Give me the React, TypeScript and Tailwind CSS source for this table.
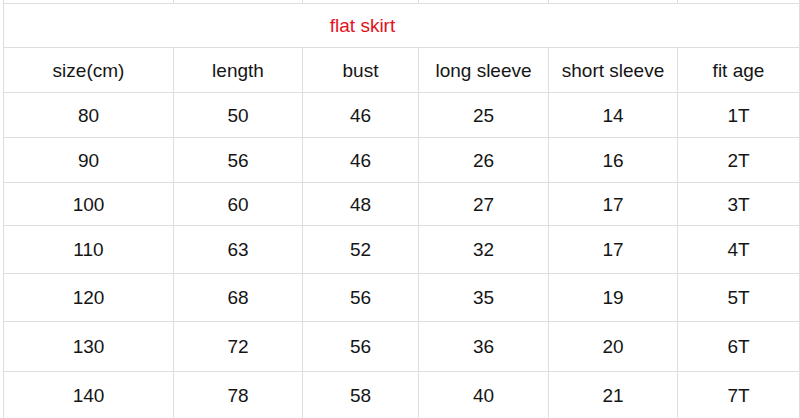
import React from "react";

const header = ["size(cm)", "length", "bust", "long sleeve", "short sleeve", "fit age"];
const rows: { h: string; cells: string[] }[] = [
  { h: "h-[45px]", cells: ["80", "50", "46", "25", "14", "1T"] },
  { h: "h-[45px]", cells: ["90", "56", "46", "26", "16", "2T"] },
  { h: "h-[43px]", cells: ["100", "60", "48", "27", "17", "3T"] },
  { h: "h-[48px]", cells: ["110", "63", "52", "32", "17", "4T"] },
  { h: "h-[48px]", cells: ["120", "68", "56", "35", "19", "5T"] },
  { h: "h-[50px]", cells: ["130", "72", "56", "36", "20", "6T"] },
  { h: "h-[47px]", cells: ["140", "78", "58", "40", "21", "7T"] },
];

const cols = "grid grid-cols-[170px_129px_116px_130px_129px_122px]";

function Row({ h, cells }: { h: string; cells: string[] }) {
  return (
    <div className={`${cols} ${h}`}>
      {cells.map((c, i) => (
        <div
          key={i}
          className="flex items-center justify-center border-r border-b border-[#dedede] text-[19px] leading-none text-[#151515]"
        >
          {c}
        </div>
      ))}
    </div>
  );
}

export default function App() {
  return (
    <div
      className="w-[800px] h-[418px] overflow-hidden bg-white"
      style={{ fontFamily: '"Liberation Sans", Arial, sans-serif' }}
    >
      <div className="ml-[3px] border-l border-[#dedede]">
        <div className={`${cols} h-[4px]`}>
          {header.map((_, i) => (
            <div key={i} className="border-r border-b border-[#dedede]" />
          ))}
        </div>
        <div className="flex h-[44px] items-center justify-center border-r border-b border-[#dedede] pr-[78px] text-[19px] leading-none text-[#e3121c]">
          flat skirt
        </div>
        <Row h="h-[45px]" cells={header} />
        {rows.map((r, i) => (
          <Row key={i} h={r.h} cells={r.cells} />
        ))}
      </div>
    </div>
  );
}
